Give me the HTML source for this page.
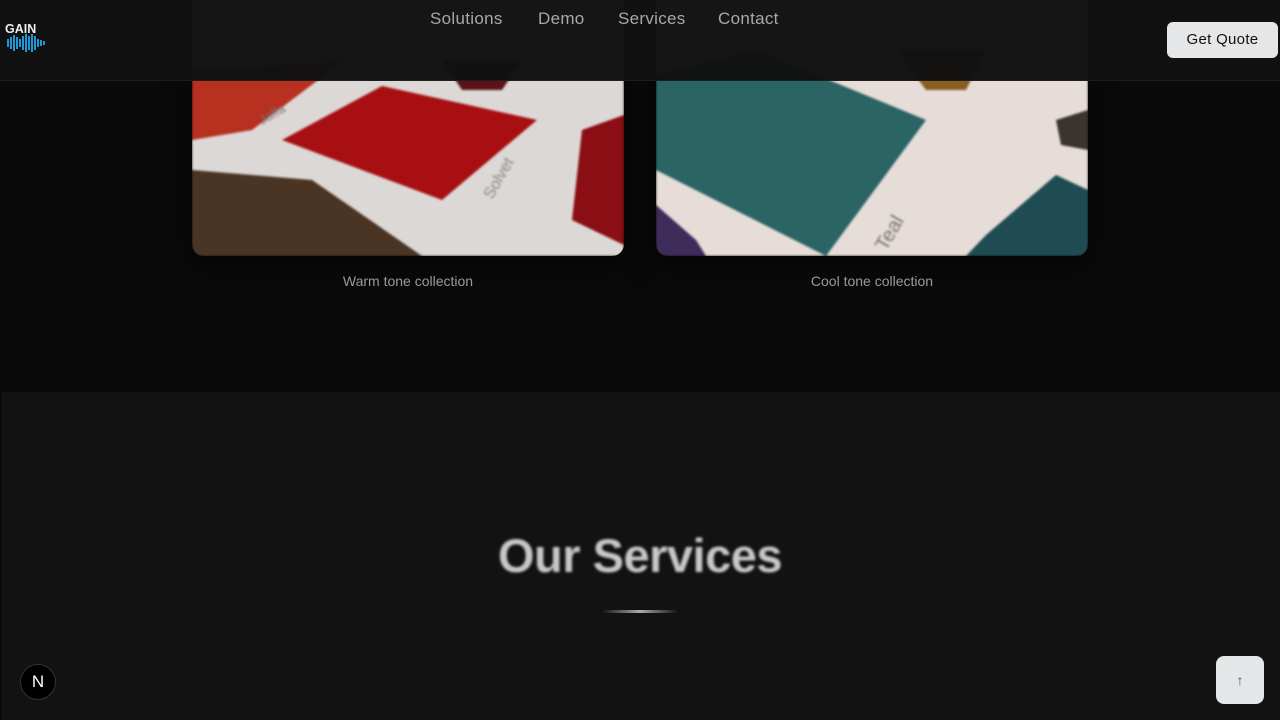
<!DOCTYPE html>
<html><head><meta charset="utf-8"><style>
*{margin:0;padding:0;box-sizing:border-box}
body{width:1280px;height:720px;overflow:hidden;background:#0a0a0a;font-family:"Liberation Sans",sans-serif;position:relative}
.img{position:absolute;top:-10px;width:432px;height:266px;border-radius:12px;overflow:hidden;box-shadow:0 10px 30px rgba(0,0,0,.6)}
.img svg{filter:blur(1px)}
.hdr{position:absolute;left:0;top:0;width:1280px;height:81px;background:rgba(17,17,17,.985);border-bottom:1px solid #1e1e1e}
.nav{position:absolute;top:9px;font-size:17px;color:#a8a8a8;letter-spacing:.3px}
.cap{position:absolute;top:273px;font-size:14px;color:#9a9a9a;width:432px;text-align:center}
.sec{position:absolute;left:2px;top:392px;width:1278px;height:328px;background:#121212}
</style></head><body>
<div class="img" style="left:192px">
<svg width="432" height="266" viewBox="0 0 432 266">
<rect width="432" height="266" fill="#dcd8d6"/>
<polygon points="0,80 150,72 60,140 0,150" fill="#b8301f"/>
<polygon points="90,150 190,96 345,130 250,210" fill="#a80f12"/>
<polygon points="0,180 120,190 230,266 0,266" fill="#4a3424"/>
<polygon points="390,140 432,125 432,255 380,230" fill="#8a0e14"/>
<polygon points="250,70 330,70 310,100 270,100" fill="#5a1418"/>
<text x="300" y="210" font-size="16" fill="#888" transform="rotate(-60 300 210)">Solvet</text>
<text x="70" y="135" font-size="13" fill="#777" transform="rotate(-30 70 135)">Jaffa</text>
</svg></div>
<div class="img" style="left:656px">
<svg width="432" height="266" viewBox="0 0 432 266">
<rect width="432" height="266" fill="#e6dcd8"/>
<polygon points="0,85 100,60 270,130 170,266 0,180" fill="#2a6464"/>
<polygon points="240,60 330,60 310,100 270,100" fill="#8a5e20"/>
<polygon points="330,245 400,185 432,200 432,266 310,266" fill="#1e4c52"/>
<polygon points="400,130 432,120 432,160 405,155" fill="#3a3430"/>
<polygon points="0,215 40,250 50,266 0,266" fill="#3e2c5a"/>
<text x="230" y="262" font-size="20" fill="#777" transform="rotate(-60 230 262)">Teal</text>
</svg></div>
<div class="hdr"></div>
<svg style="position:absolute;left:5px;top:22px" width="44" height="34" viewBox="0 0 44 34">
<text x="0" y="11" font-size="12.5" font-weight="bold" fill="#eee" font-family="Liberation Sans">GAIN</text>
<g fill="#1d9ad6"><rect x="2" y="17" width="2" height="8"/><rect x="5" y="15" width="2" height="12"/><rect x="8" y="13" width="2" height="16"/><rect x="11" y="15" width="2" height="12"/><rect x="14" y="17" width="2" height="8"/><rect x="17" y="14" width="2" height="14"/><rect x="20" y="12" width="2" height="18"/><rect x="23" y="14" width="2" height="14"/><rect x="26" y="12" width="2" height="18"/><rect x="29" y="14" width="2" height="14"/><rect x="32" y="17" width="2" height="8"/><rect x="35" y="18" width="2" height="6"/><rect x="38" y="19" width="2" height="4"/></g>
</svg>
<div class="nav" style="left:430px">Solutions</div>
<div class="nav" style="left:538px">Demo</div>
<div class="nav" style="left:618px">Services</div>
<div class="nav" style="left:718px">Contact</div>
<div style="position:absolute;left:1167px;top:22px;width:111px;height:36px;background:#e5e6e8;border-radius:6px;color:#111;font-size:15px;text-align:center;line-height:36px;letter-spacing:.3px">Get Quote</div>
<div class="cap" style="left:192px">Warm tone collection</div>
<div class="cap" style="left:656px">Cool tone collection</div>
<div class="sec"></div>
<div style="position:absolute;left:0;width:1280px;top:528px;text-align:center;font-size:47px;font-weight:bold;color:#c8c8c8;filter:blur(1.3px);letter-spacing:-.5px">Our Services</div>
<div style="position:absolute;left:602px;top:610px;width:76px;height:3px;border-radius:2px;background:linear-gradient(90deg,transparent,#aaa,transparent)"></div>
<div style="position:absolute;left:20px;top:664px;width:36px;height:36px;border-radius:50%;background:#000;border:1px solid #333;color:#fff;font-size:17px;text-align:center;line-height:34px">N</div>
<div style="position:absolute;left:1216px;top:656px;width:48px;height:48px;border-radius:8px;background:#e5e6e8;color:#555;font-size:14px;text-align:center;line-height:48px">↑</div>
</body></html>
